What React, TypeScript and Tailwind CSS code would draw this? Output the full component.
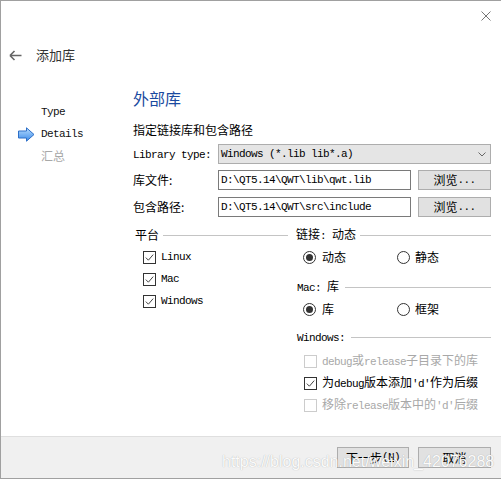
import React from "react";

function M({ children, className = "" }: { children: React.ReactNode; className?: string }) {
  return (
    <span className={"font-['Liberation_Mono',monospace] text-[11px] tracking-[-0.6px] " + className}>
      {children}
    </span>
  );
}

function Check({ checked, disabled }: { checked?: boolean; disabled?: boolean }) {
  return (
    <svg width="13" height="13" viewBox="0 0 13 13" className="shrink-0">
      <rect x="0.5" y="0.5" width="12" height="12" fill="white" stroke={disabled ? "#cccccc" : "#333333"} />
      {checked && <path d="M2.8 6.6 L5.4 9.2 L10.2 3.6" fill="none" stroke="#444444" strokeWidth="1" />}
    </svg>
  );
}

function Radio({ on }: { on?: boolean }) {
  return (
    <svg width="13" height="13" viewBox="0 0 13 13" className="shrink-0">
      <circle cx="6.5" cy="6.5" r="6" fill="white" stroke="#333333" />
      {on && <circle cx="6.5" cy="6.5" r="3.5" fill="#333333" />}
    </svg>
  );
}

function GroupTitle({ children, gap = 4 }: { children: React.ReactNode; gap?: number }) {
  return (
    <div className="flex items-center h-[16px]">
      <span className="leading-[16px] whitespace-nowrap">{children}</span>
      <div className={"flex-1 h-px bg-[#c4c4c4] " + (gap === 4 ? "ml-[4px]" : "ml-[6px]")} />
    </div>
  );
}

function Button({ children, className = "" }: { children: React.ReactNode; className?: string }) {
  return (
    <div
      className={
        "h-[20px] border border-[#adadad] bg-[#e1e1e1] flex items-center justify-center leading-none " + className
      }
    >
      {children}
    </div>
  );
}

function PathRow({ label, value }: { label: string; value: string }) {
  return (
    <div className="flex items-center h-[20px]">
      <div className="w-[85px] leading-[16px]">{label}</div>
      <div className="w-[193px] h-[20px] border border-[#7a7a7a] bg-white pl-[2px] flex items-center">
        <M>{value}</M>
      </div>
      <Button className="ml-[7px] w-[73px]">
        <span>浏览</span>
        <M>...</M>
      </Button>
    </div>
  );
}

export default function App() {
  return (
    <div className="relative w-[501px] h-[479px] bg-white border-t border-l border-b border-[#a0a0a0] flex flex-col font-['Noto_Sans_CJK_SC',sans-serif] text-[12px] text-black overflow-hidden">
      {/* title bar */}
      <div className="h-[36px] flex justify-end items-start pt-[10px] pr-[10px]">
        <svg width="10" height="10" viewBox="0 0 10 10">
          <path d="M0.5 0.5 L9.5 9.5 M9.5 0.5 L0.5 9.5" stroke="#777777" strokeWidth="1" />
        </svg>
      </div>
      <div className="h-[36px] flex items-center pl-[8px]">
        <svg width="13" height="11" viewBox="0 0 13 11">
          <path d="M1 5.5 H12.5 M1 5.5 L5.5 1 M1 5.5 L5.5 10" fill="none" stroke="#666666" strokeWidth="1.6" />
        </svg>
        <span className="ml-[14px] text-[13px] leading-[18px] text-[#333333]">添加库</span>
      </div>

      {/* body */}
      <div className="flex flex-1">
        <div className="w-[132px] pt-[28px] pl-[17px]">
          <div className="flex items-center h-[22px]">
            <div className="w-[23px]" />
            <M className="text-[#111111]">Type</M>
          </div>
          <div className="flex items-center h-[22px]">
            <div className="w-[23px]">
              <svg width="17" height="15" viewBox="0 0 17 15">
                <defs>
                  <linearGradient id="ar" x1="0" y1="0" x2="0" y2="1">
                    <stop offset="0" stopColor="#b8ddff" />
                    <stop offset="1" stopColor="#3a8ae8" />
                  </linearGradient>
                </defs>
                <path d="M0.5 4 H8.5 V0.8 L16 7.5 L8.5 14.2 V11 H0.5 Z" fill="url(#ar)" stroke="#2d6fc8" strokeWidth="1" />
              </svg>
            </div>
            <M className="text-[#111111]">Details</M>
          </div>
          <div className="flex items-center h-[22px]">
            <div className="w-[23px]" />
            <span className="text-[#a8a8a8] leading-[16px]">汇总</span>
          </div>
        </div>

        <div className="flex-1 pr-[10px] pt-[13px]">
          <div className="text-[16px] leading-[24px] text-[#1a4aa0]">外部库</div>
          <div className="mt-[12px] leading-[16px]">指定链接库和包含路径</div>

          <div className="mt-[6px] flex items-center h-[20px]">
            <div className="w-[85px]">
              <M>Library type:</M>
            </div>
            <div className="w-[273px] h-[20px] bg-[#e5e5e5] border border-[#adadad] pl-[2px] pr-[4px] flex items-center justify-between">
              <M>Windows (*.lib lib*.a)</M>
              <svg width="8" height="5" viewBox="0 0 8 5">
                <path d="M0.5 0.5 L4 4 L7.5 0.5" fill="none" stroke="#666666" strokeWidth="1" />
              </svg>
            </div>
          </div>

          <div className="mt-[6px]">
            <PathRow label="库文件:" value="D:\QT5.14\QWT\lib\qwt.lib" />
          </div>
          <div className="mt-[7px]">
            <PathRow label="包含路径:" value="D:\QT5.14\QWT\src\include" />
          </div>

          <div className="mt-[10px] pl-[2px] flex gap-[8px]">
            {/* platform */}
            <div className="w-[153px]">
              <GroupTitle>平台</GroupTitle>
              <div className="mt-[3px] pl-[8px]">
                {["Linux", "Mac", "Windows"].map((p) => (
                  <div key={p} className="flex items-center h-[22px] gap-[5px]">
                    <Check checked />
                    <M>{p}</M>
                  </div>
                ))}
              </div>
            </div>

            {/* linkage */}
            <div className="flex-1">
              <GroupTitle>
                链接<M>: </M>动态
              </GroupTitle>
              <div className="mt-[3px] pl-[7px] flex items-center h-[22px]">
                <div className="w-[94px] flex items-center gap-[6px]">
                  <Radio on />
                  <span className="leading-[16px]">动态</span>
                </div>
                <div className="flex items-center gap-[5px]">
                  <Radio />
                  <span className="leading-[16px]">静态</span>
                </div>
              </div>

              <div className="mt-[11px] pl-[1px]">
                <GroupTitle gap={6}>
                  <M>Mac: </M>库
                </GroupTitle>
              </div>
              <div className="mt-[3px] pl-[7px] flex items-center h-[22px]">
                <div className="w-[94px] flex items-center gap-[6px]">
                  <Radio on />
                  <span className="leading-[16px]">库</span>
                </div>
                <div className="flex items-center gap-[5px]">
                  <Radio />
                  <span className="leading-[16px]">框架</span>
                </div>
              </div>

              <div className="mt-[9px] pl-[1px]">
                <GroupTitle gap={6}>
                  <M>Windows:</M>
                </GroupTitle>
              </div>
              <div className="mt-[5px] pl-[8px]">
                <div className="flex items-center h-[22px] gap-[5px] text-[#a8a8a8]">
                  <Check disabled />
                  <span className="leading-[16px]">
                    <M>debug</M>或<M>release</M>子目录下的库
                  </span>
                </div>
                <div className="flex items-center h-[22px] gap-[5px]">
                  <Check checked />
                  <span className="leading-[16px]">
                    为<M>debug</M>版本添加<M>'d'</M>作为后缀
                  </span>
                </div>
                <div className="flex items-center h-[22px] gap-[5px] text-[#a8a8a8]">
                  <Check disabled />
                  <span className="leading-[16px]">
                    移除<M>release</M>版本中的<M>'d'</M>后缀
                  </span>
                </div>
              </div>
            </div>
          </div>
        </div>
      </div>

      {/* footer */}
      <div className="h-[42px] shrink-0 border-t border-[#dfdfdf] bg-[#f0f0f0] flex items-center justify-end gap-[9px] pr-[10px]">
        <Button className="w-[72px] h-[21px]">
          <span>下一步</span>
          <M>
            (<span className="underline">N</span>)
          </M>
        </Button>
        <Button className="w-[73px] h-[21px]">
          <span>取消</span>
        </Button>
      </div>

      {/* watermark */}
      <div className="absolute left-[221px] top-[451px] pointer-events-none font-['Liberation_Sans',sans-serif] text-[16px] leading-[20px] text-[#fbfbfb] [text-shadow:0_0_1px_rgba(0,0,0,0.3)] whitespace-nowrap">
        https://blog.csdn.net/weixin_42076288
      </div>
    </div>
  );
}
